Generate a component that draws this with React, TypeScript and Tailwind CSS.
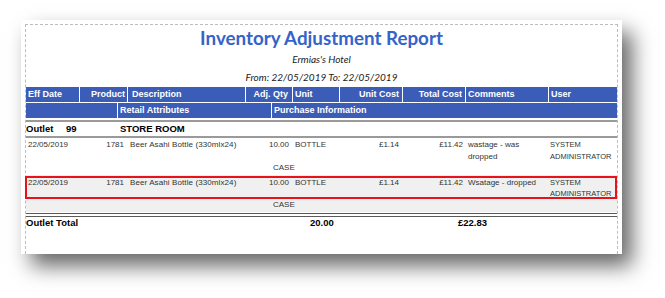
import React from "react";

const COLS = "grid grid-cols-[53px_47px_117px_46px_46px_62px_62px_82px_1fr] gap-x-px";
const SUB = "grid grid-cols-[91px_153px_1fr] gap-x-px";

type Line = {
  date: string;
  product: string;
  desc: string;
  qty: string;
  unit: string;
  unitCost: string;
  total: string;
  comment: string[];
  user: string[];
};

const LINES: Line[] = [
  {
    date: "22/05/2019",
    product: "1781",
    desc: "Beer Asahi Bottle (330mlx24)",
    qty: "10.00",
    unit: "BOTTLE",
    unitCost: "£1.14",
    total: "£11.42",
    comment: ["wastage - was", "dropped"],
    user: ["SYSTEM", "ADMINISTRATOR"],
  },
  {
    date: "22/05/2019",
    product: "1781",
    desc: "Beer Asahi Bottle (330mlx24)",
    qty: "10.00",
    unit: "BOTTLE",
    unitCost: "£1.14",
    total: "£11.42",
    comment: ["Wsatage - dropped"],
    user: ["SYSTEM", "ADMINISTRATOR"],
  },
];

function LineCells({ line, lh }: { line: Line; lh: string }) {
  return (
    <div className={`${COLS} ${lh} text-[8px] text-[#333]`}>
      <div className="pl-[2px] whitespace-nowrap">{line.date}</div>
      <div className="pr-[3px] text-right">{line.product}</div>
      <div className="pl-[2px] whitespace-nowrap tracking-[0.1px]">{line.desc}</div>
      <div className="pr-[3px] text-right">{line.qty}</div>
      <div className="pl-[2px]">{line.unit}</div>
      <div className="pr-[3px] text-right">{line.unitCost}</div>
      <div className="pr-[2px] text-right">{line.total}</div>
      <div className="pl-[2px]">
        {line.comment.map((c) => (
          <div key={c} className="whitespace-nowrap">{c}</div>
        ))}
      </div>
      <div className="pl-px text-[7.5px]">
        {line.user.map((u) => (
          <div key={u}>{u}</div>
        ))}
      </div>
    </div>
  );
}

function CaseLine({ lh }: { lh: string }) {
  return (
    <div className={`${SUB} ${lh} text-[8px] text-[#333]`}>
      <div />
      <div />
      <div className="pl-px">CASE</div>
    </div>
  );
}

export default function App() {
  const th = "bg-[#3b5db7] text-white font-bold text-[9px] leading-[15px] h-[15px] whitespace-nowrap";
  return (
    <div className="w-[665px] h-[298px] bg-white overflow-hidden font-['Liberation_Sans',sans-serif]">
      <div className="ml-[21px] mt-[20px] w-[601px] h-[234px] bg-white shadow-[10px_12px_20px_rgba(0,0,0,0.6)] pl-[4px] pr-[4px] pt-[4px]">
        <div className="h-[230px] border-t border-x border-dashed border-[#bdbdbd]">
          {/* heading */}
          <div className="h-[26px] text-center font-['Lato',sans-serif] font-bold text-[18.8px] leading-[26px] text-[#3563c9]">
            Inventory Adjustment Report
          </div>
          <div className="h-[17px] text-center font-['Lato',sans-serif] italic text-[10px] leading-[17px] text-[#222]">
            Ermias's Hotel
          </div>
          <div className="h-[18px] text-center font-['Lato',sans-serif] italic text-[10px] leading-[18px] text-[#222]">
            From: 22/05/2019 To: 22/05/2019
          </div>

          {/* column headers */}
          <div className={`${COLS} mt-px`}>
            <div className={`${th} pl-[2px]`}>Eff Date</div>
            <div className={`${th} pr-[2px] text-right`}>Product</div>
            <div className={`${th} pl-[4px]`}>Description</div>
            <div className={`${th} pr-[4px] text-right`}>Adj. Qty</div>
            <div className={`${th} pl-[2px]`}>Unit</div>
            <div className={`${th} pr-[3px] text-right`}>Unit Cost</div>
            <div className={`${th} pr-[3px] text-right`}>Total Cost</div>
            <div className={`${th} pl-[2px]`}>Comments</div>
            <div className={`${th} pl-[2px]`}>User</div>
          </div>
          <div className={`${SUB} mt-px`}>
            <div className={th} />
            <div className={`${th} pl-[2px]`}>Retail Attributes</div>
            <div className={`${th} pl-[2px]`}>Purchase Information</div>
          </div>

          {/* outlet */}
          <div className="mt-[2px] border-t-2 border-[#9a9a9a]" />
          <div className="flex h-[14px] items-center text-[9.5px] font-bold text-black">
            <span className="w-[40px]">Outlet</span>
            <span className="w-[54px]">99</span>
            <span>STORE ROOM</span>
          </div>
          <div className="border-t-2 border-[#9a9a9a]" />

          {/* lines */}
          <div className="pt-px">
            <LineCells line={LINES[0]} lh="leading-[12px]" />
            <CaseLine lh="leading-[12px] -mt-px" />
          </div>
          <div className="mt-px bg-[#f0f0f0] pt-px pb-px">
            <div className="h-[23px] ring-2 ring-inset ring-[#e8121b] -ml-px">
              <div className="ml-px pt-[1px]">
                <LineCells line={LINES[1]} lh="leading-[11px]" />
              </div>
            </div>
            <CaseLine lh="leading-[12px]" />
          </div>

          {/* total */}
          <div className="mt-px border-t-[4px] border-double border-[#5a5a5a]" />
          <div className="flex h-[13px] items-center text-[9.5px] font-bold text-black">
            <span className="w-[284px]">Outlet Total</span>
            <span className="w-[148px]">20.00</span>
            <span>£22.83</span>
          </div>
        </div>
      </div>
    </div>
  );
}
